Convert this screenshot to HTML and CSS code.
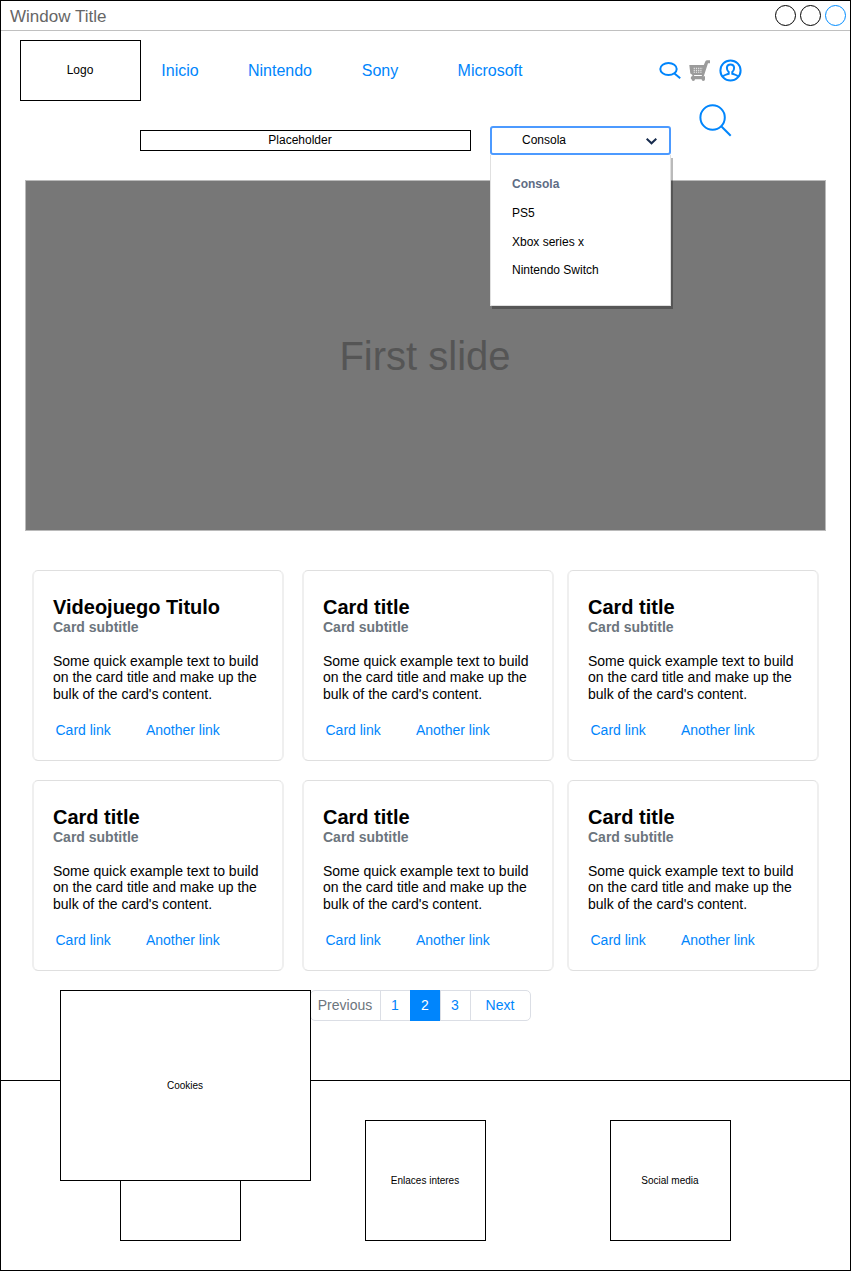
FILE: index.html
```html
<!DOCTYPE html>
<html lang="es">
<head>
<meta charset="utf-8">
<title>Window Title</title>
<link rel="stylesheet" href="styles.css">
</head>
<body>
<div class="window">
  <div class="titlebar">
    <span class="titlebar-text">Window Title</span>
    <svg class="controls" width="75" height="25" viewBox="0 0 75 25" fill="none">
      <circle cx="12.5" cy="12.5" r="10" stroke="#000"/>
      <circle cx="37.5" cy="12.5" r="10" stroke="#000"/>
      <circle cx="62.5" cy="12.5" r="10" stroke="#008cff"/>
    </svg>
  </div>

  <header class="header">
    <div class="logo">Logo</div>
    <nav class="nav">
      <a class="w80">Inicio</a><a class="w120">Nintendo</a><a class="w80">Sony</a><a class="w140">Microsoft</a>
    </nav>
    <div class="icons">
      <svg width="24" height="24" viewBox="0 0 24 24" fill="none" stroke="#0085fc" stroke-width="2"><ellipse cx="10.500" cy="11" rx="8.200" ry="6.100"/><path d="M16.200 15.300l6 4.900"/></svg>
      <svg width="24" height="24" viewBox="0 0 24 24"><path fill="#9b9b9b" d="M1.300 7H15.800l1.500-3.500Q17.800 2.200 19.200 2.200H22V5.200H20L16 17.500Q15.800 18.300 15 18.300H17V21.300Q17 23 15.300 23T13.600 21.300H7Q7 23 5.300 23T3.600 21.300Q2.600 21 2.800 19.700 2.900 18.300 4.500 18L4.200 16.700 2.300 15.500z"/><path fill="#fff" d="M6 17.100h8l-.3.900H6.200z"/><path d="M5.700 10.300h9M5.700 12.300h8.800M5.700 14.200h8.500" stroke="#fff" stroke-width=".9" stroke-dasharray="1.200 1"/></svg>
      <svg class="user" width="24" height="24" viewBox="0 0 24 24" fill="none" stroke="#0085fc" stroke-width="2"><circle cx="11.500" cy="12.500" r="10.100"/><path d="M4 18.600C4.700 17.100 6.500 16.900 9.700 15.800V14Q7.700 12.200 7.900 9.500Q8.200 6.400 11.500 6.400T15.100 9.500Q15.300 12.200 13.300 14V15.800C16.500 16.900 18.300 17.100 19 18.600"/></svg>
    </div>
  </header>

  <div class="search-row">
    <div class="search-field">Placeholder</div>
    <div class="select">
      <div class="select-box"><span>Consola</span><svg width="12" height="8" viewBox="0 0 12 8" fill="none" stroke="#172b4d" stroke-width="2"><path d="M1.700 .8l4.800 4.500 4.800-4.500"/></svg></div>
      <div class="menu">
        <div class="menu-title">Consola</div>
        <div class="item">PS5</div>
        <div class="item">Xbox series x</div>
        <div class="item last">Nintendo Switch</div>
      </div>
    </div>
    <svg class="search-big" width="34" height="34" viewBox="0 0 34 34" fill="none" stroke="#0085fc" stroke-width="2"><circle cx="13.600" cy="13.500" r="12.200"/><path d="M22 22l9.700 9.700"/></svg>
  </div>

  <section class="slide">First slide</section>

  <main class="cards">
    <article class="card"><h2>Videojuego Titulo</h2><h3>Card subtitle</h3><p>Some quick example text to build<br>on the card title and make up the<br>bulk of the card's content.</p><div class="links"><a>Card link</a><a>Another link</a></div></article>
    <article class="card"><h2>Card title</h2><h3>Card subtitle</h3><p>Some quick example text to build<br>on the card title and make up the<br>bulk of the card's content.</p><div class="links"><a>Card link</a><a>Another link</a></div></article>
    <article class="card"><h2>Card title</h2><h3>Card subtitle</h3><p>Some quick example text to build<br>on the card title and make up the<br>bulk of the card's content.</p><div class="links"><a>Card link</a><a>Another link</a></div></article>
    <article class="card"><h2>Card title</h2><h3>Card subtitle</h3><p>Some quick example text to build<br>on the card title and make up the<br>bulk of the card's content.</p><div class="links"><a>Card link</a><a>Another link</a></div></article>
    <article class="card"><h2>Card title</h2><h3>Card subtitle</h3><p>Some quick example text to build<br>on the card title and make up the<br>bulk of the card's content.</p><div class="links"><a>Card link</a><a>Another link</a></div></article>
    <article class="card"><h2>Card title</h2><h3>Card subtitle</h3><p>Some quick example text to build<br>on the card title and make up the<br>bulk of the card's content.</p><div class="links"><a>Card link</a><a>Another link</a></div></article>
  </main>

  <div class="pagination">
    <span class="page wide muted">Previous</span><span class="page">1</span><span class="page active">2</span><span class="page">3</span><span class="page next">Next</span>
  </div>

  <footer class="footer">
    <div class="box"></div>
    <div class="box">Enlaces interes</div>
    <div class="box">Social media</div>
  </footer>

  <div class="cookies">Cookies</div>
</div>
</body>
</html>
```
FILE: styles.css
```css
* { box-sizing: border-box; }
body { margin: 0; background: #fff; font-family: "Liberation Sans", Arial, sans-serif; color: #000; }
.window { position: relative; width: 851px; height: 1271px; border: 1px solid #000; overflow: hidden; }

.titlebar { display: flex; justify-content: space-between; height: 30px; border-bottom: 1px solid #c0c0c0; padding: 2px 2px 0 9px; }
.titlebar-text { font-size: 17px; line-height: 27px; color: #666; }
.controls { display: block; }

.header { display: flex; height: 70px; padding: 9px 0 0 19px; }
.logo { display: flex; align-items: center; justify-content: center; width: 121px; height: 61px; border: 1px solid #000; font-size: 12px; padding: 0 1px 1px 0; }
.nav { display: flex; width: 420px; margin-left: -1px; font-size: 16px; line-height: 61px; text-align: center; color: #0085fc; }
.w80 { width: 80px; }
.w120 { width: 120px; }
.w140 { width: 140px; }
.icons { display: flex; gap: 6px; margin: 18px 0 0 98px; }
.icons .user { margin-left: 1px; }

.search-row { display: flex; height: 79px; padding-left: 139px; }
.search-field { width: 331px; height: 21px; margin-top: 29px; border: 1px solid #000; font-size: 12px; line-height: 18px; text-align: center; padding-right: 11px; }
.select { position: relative; width: 181px; margin: 25px 0 0 19px; font-size: 12px; }
.select-box { display: flex; justify-content: space-between; align-items: center; width: 181px; height: 29px; border: 2px solid #4c9aff; border-radius: 3px; padding: 0 12px 0 30px; }
.select-box span { line-height: 24px; margin-bottom: 1px; }
.select-box svg { margin-top: 2px; }
.menu { position: absolute; z-index: 2; top: 29px; left: 0; width: 181px; height: 151px; background: #fff; border: 1px solid #e0e0e0; border-top: 0; box-shadow: 2px 3px 0 rgba(0, 0, 0, .27); padding: 15px 0 0 21px; }
.menu-title { font-weight: bold; color: #5e6c84; line-height: 29px; }
.item { line-height: 29px; }
.item.last { line-height: 27px; }
.search-big { margin: 3px 0 0 28px; }

.slide { width: 801px; height: 351px; margin-left: 24px; background: #777; border: 1px solid #bababa; padding-right: 1px; font-size: 40px; line-height: 351px; color: #555; text-align: center; }

.cards { display: grid; grid-template-columns: 270px 265px 252px; row-gap: 19px; margin: 39px 0 0 31px; }
.card { width: 252px; height: 191px; border: solid #dfdfdf; border-width: 1px 2px; border-left-color: #efefef; border-right-color: #efefef; border-radius: 6px; padding: 24px 0 0 19px; }
.card h2 { margin: 0; font-size: 20px; line-height: 24px; }
.card h3 { margin: 0; font-size: 14px; line-height: 17px; color: #6c757d; }
.card p { margin: 16.6px 0 0; font-size: 14px; line-height: 16.5px; }
.links { display: flex; margin-top: 20px; padding-left: 2.5px; font-size: 14px; line-height: 17px; color: #0085fc; }
.links a + a { margin-left: 35.2px; }

.pagination { display: flex; width: 221px; height: 31px; margin: 19px 0 0 309px; border: 1px solid #dbdee5; border-radius: 5px; font-size: 14px; line-height: 29px; text-align: center; color: #0085fc; }
.page { width: 30px; border-left: 1px solid #dbdee5; padding-right: 1px; }
.wide { width: 69px; border-left: 0; }
.next { width: 60px; }
.muted { color: #6c757d; }
.active { height: 31px; margin-top: -1px; padding-top: 1px; border-color: #0085fc; background: #0085fc; color: #fff; }

.footer { display: flex; gap: 124px; height: 190px; margin-top: 59px; border-top: 1px solid #000; padding: 39px 0 0 119px; }
.box { display: flex; align-items: center; justify-content: center; width: 121px; height: 121px; border: 1px solid #000; padding-right: 1px; font-size: 10px; }
.cookies { position: absolute; left: 59px; top: 989px; display: flex; align-items: center; justify-content: center; width: 251px; height: 191px; background: #fff; border: 1px solid #000; padding-right: 1px; font-size: 10px; }
```
